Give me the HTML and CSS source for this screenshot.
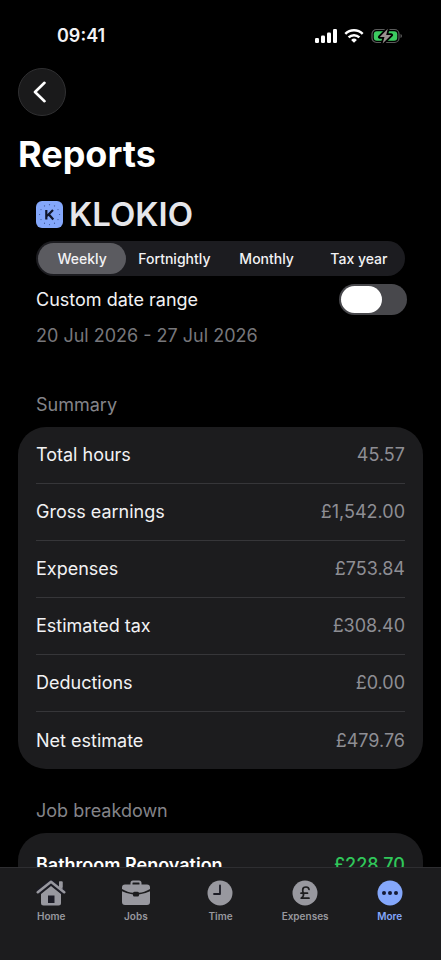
FILE: index.html
```html
<!DOCTYPE html>
<html lang="en">
<head>
<meta charset="utf-8">
<meta name="viewport" content="width=device-width, initial-scale=1">
<title>Reports</title>
<link rel="stylesheet" href="styles.css">
</head>
<body>
<div class="app">
  <div class="status">
    <time>09:41</time>
    <div class="status-icons">
      <svg width="22" height="16" viewBox="0 0 22 16" fill="#fff"><rect x="0" y="10" width="4" height="5" rx="1.200"/><rect x="6" y="7.500" width="4" height="7.500" rx="1.200"/><rect x="12" y="4.500" width="4" height="10.500" rx="1.200"/><rect x="18" y="1" width="4" height="14" rx="1.200"/></svg>
      <svg width="20" height="16" viewBox="0 0 20 16" fill="none" stroke="#fff" stroke-width="2.500"><path d="M1.300 5.900a12.400 12.400 0 0 1 17.400 0M4.600 9.300a7.800 7.800 0 0 1 10.800 0"/><path d="M10 14.700 7.100 12a4.200 4.200 0 0 1 5.800 0z" fill="#fff" stroke="none"/></svg>
      <svg width="32" height="16" viewBox="0 0 32 16"><rect x="1" y="1.500" width="27" height="13" rx="4.500" fill="#000" stroke="#5c5c5c" stroke-width="1.200"/><rect x="2.800" y="3.200" width="23.400" height="9.600" rx="3" fill="#3ccb60"/><path d="M29.500 6v4q1.500-.6 1.500-2t-1.500-2z" fill="#5c5c5c"/><path d="M16.800.8 8.800 9h4.700l-1.900 6.500L20.200 7h-5z" fill="#9a918f" stroke="#000" stroke-width="3.600" stroke-linejoin="round" paint-order="stroke"/></svg>
    </div>
  </div>
  <main class="content">
    <button class="back" type="button" aria-label="Back"><svg width="14" height="22" viewBox="0 0 14 22" fill="none" stroke="#fff" stroke-width="2.600" stroke-linecap="round" stroke-linejoin="round"><path d="M11.500 1.800 2 11l9.500 9.200"/></svg></button>
    <h1>Reports</h1>
    <section class="filters">
      <div class="brand">
        <svg width="27" height="27" viewBox="0 0 27 27"><rect width="27" height="27" rx="6" fill="#84a7fb"/><g fill="none" stroke="#435c9d" stroke-width="1.200" stroke-linecap="round"><path d="M13.500 3.500v.2M18.500 4.800v.1M22 8.500v.1M23.500 13.500h.1M22 18.500v.1M18.500 22.200v.1M13.500 23.500v.1M8.500 22.200v.1M5 18.500v.1M3.500 13.500h.1M5 8.500v.1M8.500 4.800v.1"/></g><path d="M10.300 9v9.500M17 9l-6 6M12.700 13.300l4.600 5.200" fill="none" stroke="#11162a" stroke-width="2.200"/></svg>
        <span>KLOKIO</span>
      </div>
      <div class="segments" role="radiogroup" aria-label="Period">
        <label><input type="radio" name="period" checked><span>Weekly</span></label>
        <label><input type="radio" name="period"><span>Fortnightly</span></label>
        <label><input type="radio" name="period"><span>Monthly</span></label>
        <label><input type="radio" name="period"><span>Tax year</span></label>
      </div>
      <div class="toggle-row">
        <label for="custom">Custom date range</label>
        <input id="custom" class="switch" type="checkbox" role="switch">
      </div>
      <p class="dates">20 Jul 2026 - 27 Jul 2026</p>
    </section>
    <h2>Summary</h2>
    <dl class="card">
      <div class="row"><dt>Total hours</dt><dd>45.57</dd></div>
      <div class="row"><dt>Gross earnings</dt><dd>£1,542.00</dd></div>
      <div class="row"><dt>Expenses</dt><dd>£753.84</dd></div>
      <div class="row"><dt>Estimated tax</dt><dd>£308.40</dd></div>
      <div class="row"><dt>Deductions</dt><dd>£0.00</dd></div>
      <div class="row"><dt>Net estimate</dt><dd>£479.76</dd></div>
    </dl>
    <h2>Job breakdown</h2>
    <dl class="card jobs">
      <div class="row"><dt>Bathroom Renovation</dt><dd>£228.70</dd></div>
    </dl>
  </main>
  <nav class="tabs" aria-label="Main">
    <a href="#home"><svg width="30" height="26" viewBox="0 0 30 26"><path d="M23 1.500h3.500v9L23 7.500z" fill="currentColor"/><path d="M5 14 15 6l10 8v9a2.500 2.500 0 0 1-2.500 2.500h-15A2.500 2.500 0 0 1 5 23z" fill="currentColor"/><path d="M1.800 12.200 15 1.800l13.200 10.400" fill="none" stroke="#1c1c26" stroke-width="5.600" stroke-linejoin="round"/><path d="M23 2.500q0-1 1-1h1.500q1 0 1 1v7L23 7z" fill="currentColor"/><path d="M1.800 12.200 15 1.800l13.200 10.400" fill="none" stroke="currentColor" stroke-width="2.600" stroke-linecap="round" stroke-linejoin="round"/><path d="M12 15.500h6.500V23H12z" fill="#1c1c26"/></svg><span>Home</span></a>
    <a href="#jobs"><svg width="30" height="26" viewBox="0 0 30 26"><path d="M10.500 5V3q0-1.500 1.500-1.500h6Q19.500 1.500 19.500 3v2" fill="none" stroke="currentColor" stroke-width="2"/><path d="M4 4.500h22a3 3 0 0 1 3 3V9q-6 3.500-11 3.700-.5-1-1.500-1h-3q-1 0-1.500 1Q7 12.500 1 9V7.500a3 3 0 0 1 3-3z" fill="currentColor"/><path d="M1 11.300q5 2.500 11 3.200v.7q0 1.300 1.300 1.300h3.400q1.300 0 1.300-1.300v-.7q6-.7 11-3.200V22a3 3 0 0 1-3 3H4a3 3 0 0 1-3-3z" fill="currentColor"/></svg><span>Jobs</span></a>
    <a href="#time"><svg width="26" height="26" viewBox="0 0 26 26"><circle cx="13" cy="13" r="12.500" fill="currentColor"/><path d="M13 5.500V14H7" fill="none" stroke="#1c1c26" stroke-width="1.800" stroke-linecap="round" stroke-linejoin="round"/></svg><span>Time</span></a>
    <a href="#expenses"><svg width="26" height="26" viewBox="0 0 26 26"><circle cx="13" cy="13" r="12.500" fill="currentColor"/><path d="M17 9.500q-.3-2.500-3-2.500-3.300 0-3.300 3 0 1.500.7 3.200.8 2.800-2.200 5H17M9 13.200h6.500" fill="none" stroke="#1c1c1e" stroke-width="1.700" stroke-linecap="round" stroke-linejoin="round"/></svg><span>Expenses</span></a>
    <a href="#more" class="active" aria-current="page"><svg width="26" height="26" viewBox="0 0 26 26"><circle cx="13" cy="13" r="12.500" fill="currentColor"/><g fill="#151a35"><circle cx="7" cy="13" r="2"/><circle cx="13" cy="13" r="2"/><circle cx="19" cy="13" r="2"/></g></svg><span>More</span></a>
  </nav>
</div>
</body>
</html>
```
FILE: styles.css
```css
* { box-sizing: border-box; }
body {
  margin: 0;
  background: #000;
  color: #f2f2f4;
  font-family: Inter, "Liberation Sans", sans-serif;
  font-size: 18px;
  line-height: 24px;
}
svg { display: block; }
.app {
  display: flex;
  flex-direction: column;
  height: 100vh;
}
.status {
  display: flex;
  flex: none;
  justify-content: space-between;
  align-items: center;
  padding: 24px 38px 20px 57px;
  font-weight: 600;
}
.status-icons {
  display: flex;
  align-items: center;
  gap: 7px;
}
.content {
  flex: 1;
  min-height: 0;
  overflow: hidden;
  padding: 0 18px;
}
.back {
  display: grid;
  place-items: center;
  width: 48px;
  height: 48px;
  padding: 0 4px 0 0;
  border: 1px solid #303032;
  border-radius: 50%;
  background: #1a1a1b;
}
h1 {
  margin: 16px 0 24px;
  color: #fff;
  font-size: 36px;
  line-height: 44px;
  font-weight: 700;
}
.filters { padding: 0 18px; }
.brand {
  display: flex;
  align-items: center;
  gap: 6px;
  height: 28px;
  margin-bottom: 13px;
  color: #e6e6ea;
  font-size: 33px;
  font-weight: 600;
}
.segments {
  display: grid;
  grid-template-columns: repeat(4, 1fr);
  height: 35px;
  border-radius: 18px;
  background: #1c1c20;
  font-size: 14px;
  font-weight: 500;
}
.segments label {
  position: relative;
  display: grid;
  padding: 2px;
}
.segments input {
  position: absolute;
  opacity: 0;
}
.segments span {
  display: grid;
  place-items: center;
  border-radius: 16px;
}
.segments input:checked + span { background: #5b5b60; }
.toggle-row {
  display: flex;
  justify-content: space-between;
  align-items: center;
  margin: 8px -2px 9px 0;
}
.switch {
  appearance: none;
  display: flex;
  width: 68px;
  height: 31px;
  margin: 0;
  padding: 2px;
  border-radius: 16px;
  background: #48484c;
}
.switch::before {
  content: "";
  width: 41px;
  border-radius: 14px;
  background: #fff;
}
.switch:checked { justify-content: flex-end; background: #34c759; }
.dates {
  margin: 0 0 45px;
  color: #77777b;
}
h2 {
  margin: 0 18px 10px;
  color: #848489;
  font-size: 18px;
  font-weight: 400;
}
.card {
  margin: 0 0 30px;
  padding: 0 18px;
  border-radius: 28px;
  background: #1c1c1e;
}
.row {
  display: flex;
  justify-content: space-between;
  align-items: center;
  height: 57px;
  border-bottom: 1px solid #363639;
}
.row:last-child { border-bottom: 0; }
dd {
  margin: 0;
  color: #8e8e94;
}
.jobs { padding-top: 3px; }
.jobs dt { color: #fff; font-weight: 600; }
.jobs dd { color: #30c75a; font-weight: 500; }
.tabs {
  display: grid;
  flex: none;
  grid-template-columns: repeat(5, 1fr);
  padding: 12px 9px 35px;
  border-top: 1px solid #2e2e31;
  background: #1c1c1e;
  font-size: 10px;
  line-height: 18px;
  font-weight: 600;
}
.tabs a {
  display: flex;
  flex-direction: column;
  align-items: center;
  gap: 1px;
  color: #98989f;
  text-decoration: none;
}
.tabs .active { color: #84a7fb; }
```
